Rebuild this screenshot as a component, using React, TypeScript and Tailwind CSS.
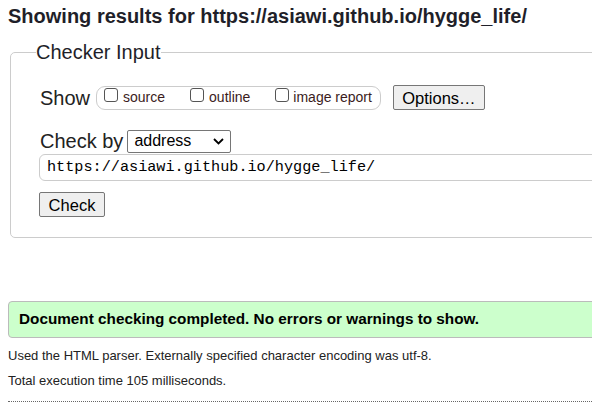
export default function App() {
  const url = 'https://asiawi.github.io/hygge_life/';

  return (
    <div className="w-[592px] h-[420px] overflow-hidden bg-white text-[#222] font-['Liberation_Sans',Arial,sans-serif]">
      <div className="w-[660px] px-2">
        <h2 className="pt-[4px] text-[20px] leading-[24px] font-bold text-[#1f1f29]">
          Showing results for {url}
        </h2>

        <fieldset className="mt-[13px] ml-[2px] border border-[#ccc] rounded-[5px] pl-[25px] pb-[19px]">
          <legend className="text-[20px] leading-[22px] text-[#1f1f29]">Checker Input</legend>

          <div className="pl-[4px]">
            <div className="mt-[22px] h-[25px] flex items-center">
              <span className="text-[20px] leading-[24px]">Show</span>
              <div className="ml-[6px] flex items-center h-[24px] pl-[7px] pr-[8px] border border-[#ccc] rounded-[9px] text-[14px] text-[#3b1c1c]">
                <label className="flex items-center">
                  <span className="w-[14px] h-[14px] border border-[#555] rounded-[3px] mb-[5px]" />
                  <span className="ml-[5px]">source</span>
                </label>
                <label className="flex items-center ml-[25px]">
                  <span className="w-[14px] h-[14px] border border-[#555] rounded-[3px] mb-[5px]" />
                  <span className="ml-[5px]">outline</span>
                </label>
                <label className="flex items-center ml-[25px]">
                  <span className="w-[14px] h-[14px] border border-[#555] rounded-[3px] mb-[5px]" />
                  <span className="ml-[4px]">image report</span>
                </label>
              </div>
              <button className="ml-[12px] h-[25px] w-[92px] bg-[#efefef] border border-[#767676] rounded-[2px] text-[16.5px] leading-[20px] text-black">
                Options…
              </button>
            </div>

            <div className="mt-[19px] h-[24px] flex items-center">
              <span className="text-[20px] leading-[24px]">Check by</span>
              <div className="ml-[4px] w-[104px] h-[23px] flex items-center justify-between pl-[6px] pr-[6px] border border-[#767676] rounded-[2px] text-[16px] text-black">
                <span className="leading-[20px]">address</span>
                <svg width="11" height="7" viewBox="0 0 11 7">
                  <path d="M1 1l4.5 4.5L10 1" fill="none" stroke="#000" strokeWidth="1.8" />
                </svg>
              </div>
            </div>

            <div className="mt-[1px] -ml-[1px] h-[27px] flex items-center pl-[7px] border border-[#ccc] rounded-l-[6px] font-['Liberation_Mono',monospace] text-[15.2px] text-black">
              {url}
            </div>

            <button className="mt-[11px] -ml-[1px] h-[25px] w-[66px] bg-[#efefef] border border-[#767676] rounded-[2px] text-[16.5px] leading-[20px] text-black">
              Check
            </button>
          </div>
        </fieldset>

        <div className="mt-[63px] h-[37px] flex items-center pl-[10px] bg-[#ccffcc] border border-[#bbb] rounded-[4px]">
          <p className="text-[15.3px] font-bold text-black">
            Document checking completed. No errors or warnings to show.
          </p>
        </div>

        <p className="mt-[8px] text-[13px] leading-[20px]">
          Used the HTML parser. Externally specified character encoding was utf-8.
        </p>
        <p className="mt-[5px] text-[13px] leading-[20px]">Total execution time 105 milliseconds.</p>
        <div className="mt-[10px] border-t border-dotted border-[#666]" />
      </div>
    </div>
  );
}
